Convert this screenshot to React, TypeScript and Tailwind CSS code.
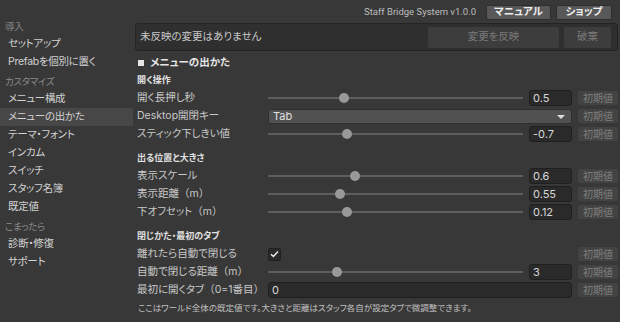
import React from "react";

const font = { fontFamily: '"Inter", "Noto Sans CJK JP", sans-serif' };

function J({ text }: { text: string }) {
  const parts = text.split(/([（）])/);
  return (
    <>
      {parts.map((p, i) =>
        p === "（" || p === "）" ? (
          <span key={i} className="[font-feature-settings:normal]">
            {p}
          </span>
        ) : (
          <React.Fragment key={i}>{p}</React.Fragment>
        )
      )}
    </>
  );
}

function SideCat({ children, first }: { children: React.ReactNode; first?: boolean }) {
  return (
    <div className={`h-[15px] flex items-center pl-[5px] text-[9.5px] tracking-[-0.3px] text-[#8a8a8a] ${first ? "" : "mt-[4px]"}`}>
      {children}
    </div>
  );
}

function SideItem({ children, active }: { children: React.ReactNode; active?: boolean }) {
  return (
    <div
      className={`h-[18px] flex items-center pl-[8px] text-[10.5px] tracking-[-0.3px] text-[#d2d2d2] ${active ? "bg-[#474747]" : ""}`}
    >
      {children}
    </div>
  );
}

function ResetBtn() {
  return (
    <div className="w-[40px] h-[14px] ml-[4px] flex items-center justify-center bg-[#434343] rounded-[2px] text-[10px] text-[#7f7f7f]">
      初期値
    </div>
  );
}

function Slider({ pos, value }: { pos: number; value: string }) {
  return (
    <>
      <div className="relative w-[255px] h-[18px] flex items-center">
        <div className="w-full h-[2px] bg-[#5e5e5e]" />
        <div
          className="absolute top-[4px] w-[10px] h-[10px] rounded-full bg-[#999999]"
          style={{ left: pos - 5 }}
        />
      </div>
      <div className="ml-[6px] w-[43px] h-[16px] bg-[#2a2a2a] border border-[#1f1f1f] rounded-[3px] flex items-center pl-[3px] text-[11px] text-[#d8d8d8]">
        {value}
      </div>
    </>
  );
}

function Row({ label, children, reset = true }: { label: string; children?: React.ReactNode; reset?: boolean }) {
  return (
    <div className="h-[18px] flex items-center">
      <div className="w-[133px] pl-[2px] text-[10.5px] text-[#c8c8c8] whitespace-nowrap">
        <J text={label} />
      </div>
      <div className="flex items-center flex-1">{children}</div>
      {reset && <ResetBtn />}
    </div>
  );
}

function SubHead({ children, first }: { children: React.ReactNode; first?: boolean }) {
  return (
    <div className={`h-[18px] flex items-center pl-[2px] text-[9px] font-bold text-[#e0e0e0] ${first ? "" : "mt-[6px]"}`}>
      {children}
    </div>
  );
}

export default function App() {
  return (
    <div
      className="w-[620px] h-[322px] bg-[#383838] flex overflow-hidden [font-feature-settings:'palt']"
      style={font}
    >
      <div className="w-[133px] shrink-0 pt-[20px]">
        <SideCat first>導入</SideCat>
        <SideItem>セットアップ</SideItem>
        <SideItem>Prefabを個別に置く</SideItem>
        <SideCat>カスタマイズ</SideCat>
        <SideItem>メニュー構成</SideItem>
        <SideItem active>メニューの出かた</SideItem>
        <SideItem>テーマ・フォント</SideItem>
        <SideItem>インカム</SideItem>
        <SideItem>スイッチ</SideItem>
        <SideItem>スタッフ名簿</SideItem>
        <SideItem>既定値</SideItem>
        <SideCat>こまったら</SideCat>
        <SideItem>診断・修復</SideItem>
        <SideItem>サポート</SideItem>
      </div>
      <div className="flex-1 flex flex-col pl-[2px] pr-[2px]">
        <div className="h-[23px] flex items-center justify-end pt-[1px]">
          <span
            className="text-[9.5px] text-[#bdbdbd] mr-[10px]"
            style={{ fontFamily: 'Roboto, "Noto Sans CJK JP", sans-serif' }}
          >
            Staff Bridge System v1.0.0
          </span>
          <div className="w-[65px] h-[15px] bg-[#585858] border border-[#2e2e2e] rounded-[2px] flex items-center justify-center text-[10.5px] text-[#eeeeee] font-bold">
            マニュアル
          </div>
          <div className="w-[56px] h-[15px] ml-[5px] mr-[6px] bg-[#585858] border border-[#2e2e2e] rounded-[2px] flex items-center justify-center text-[10.5px] text-[#eeeeee] font-bold">
            ショップ
          </div>
        </div>
        <div className="h-[28px] bg-[#2f2f2f] border border-[#242424] rounded-[3px] flex items-center pl-[4px] pr-[6px]">
          <span className="flex-1 text-[10.5px] text-[#c8c8c8]">未反映の変更はありません</span>
          <div className="w-[131px] h-[21px] bg-[#3d3d3d] rounded-[2px] flex items-center justify-center text-[10.5px] text-[#7a7a7a]">
            変更を反映
          </div>
          <div className="w-[47px] h-[21px] ml-[5px] bg-[#3d3d3d] rounded-[2px] flex items-center justify-center text-[10.5px] text-[#7a7a7a]">
            破棄
          </div>
        </div>
        <div className="h-[17px] mt-[3px] flex items-center pl-[3px] text-[10.5px] font-bold text-[#e6e6e6]">
          <span className="inline-block w-[6px] h-[6px] bg-[#e6e6e6] mr-[6px]" />
          メニューの出かた
        </div>
        <SubHead first>開く操作</SubHead>
        <Row label="開く長押し秒">
          <Slider pos={76} value="0.5" />
        </Row>
        <Row label="Desktop開閉キー">
          <div className="relative w-[304px] h-[15px] bg-[#515151] border border-[#2f2f2f] rounded-[3px] flex items-center pl-[4px] text-[11px] text-[#e0e0e0]">
            Tab
            <div className="absolute right-[6px] top-[5px] w-0 h-0 border-l-[4px] border-r-[4px] border-t-[4px] border-l-transparent border-r-transparent border-t-[#dddddd]" />
          </div>
        </Row>
        <Row label="スティック下しきい値">
          <Slider pos={79} value="-0.7" />
        </Row>
        <SubHead>出る位置と大きさ</SubHead>
        <Row label="表示スケール">
          <Slider pos={87} value="0.6" />
        </Row>
        <Row label="表示距離（m）">
          <Slider pos={72} value="0.55" />
        </Row>
        <Row label="下オフセット（m）">
          <Slider pos={79} value="0.12" />
        </Row>
        <SubHead>閉じかた・最初のタブ</SubHead>
        <Row label="離れたら自動で閉じる">
          <div className="flex-1 flex items-center">
            <div className="w-[13px] h-[13px] bg-[#2a2a2a] border border-[#1f1f1f] rounded-[2px] flex items-center justify-center">
              <svg width="9" height="8" viewBox="0 0 9 8">
                <path d="M1 4.2 L3.4 6.5 L8 1.5" stroke="#e8e8e8" strokeWidth="1.5" fill="none" />
              </svg>
            </div>
          </div>
        </Row>
        <Row label="自動で閉じる距離（m）">
          <Slider pos={69} value="3" />
        </Row>
        <Row label="最初に開くタブ（0=1番目）">
          <div className="w-[304px] h-[16px] bg-[#2a2a2a] border border-[#1f1f1f] rounded-[3px] flex items-center pl-[3px] text-[11px] text-[#d8d8d8]">
            0
          </div>
        </Row>
        <div className="h-[18px] flex items-center pl-[3px] text-[8.5px] text-[#c0c0c0]">
          ここはワールド全体の既定値です。大きさと距離はスタッフ各自が設定タブで微調整できます。
        </div>
      </div>
    </div>
  );
}
